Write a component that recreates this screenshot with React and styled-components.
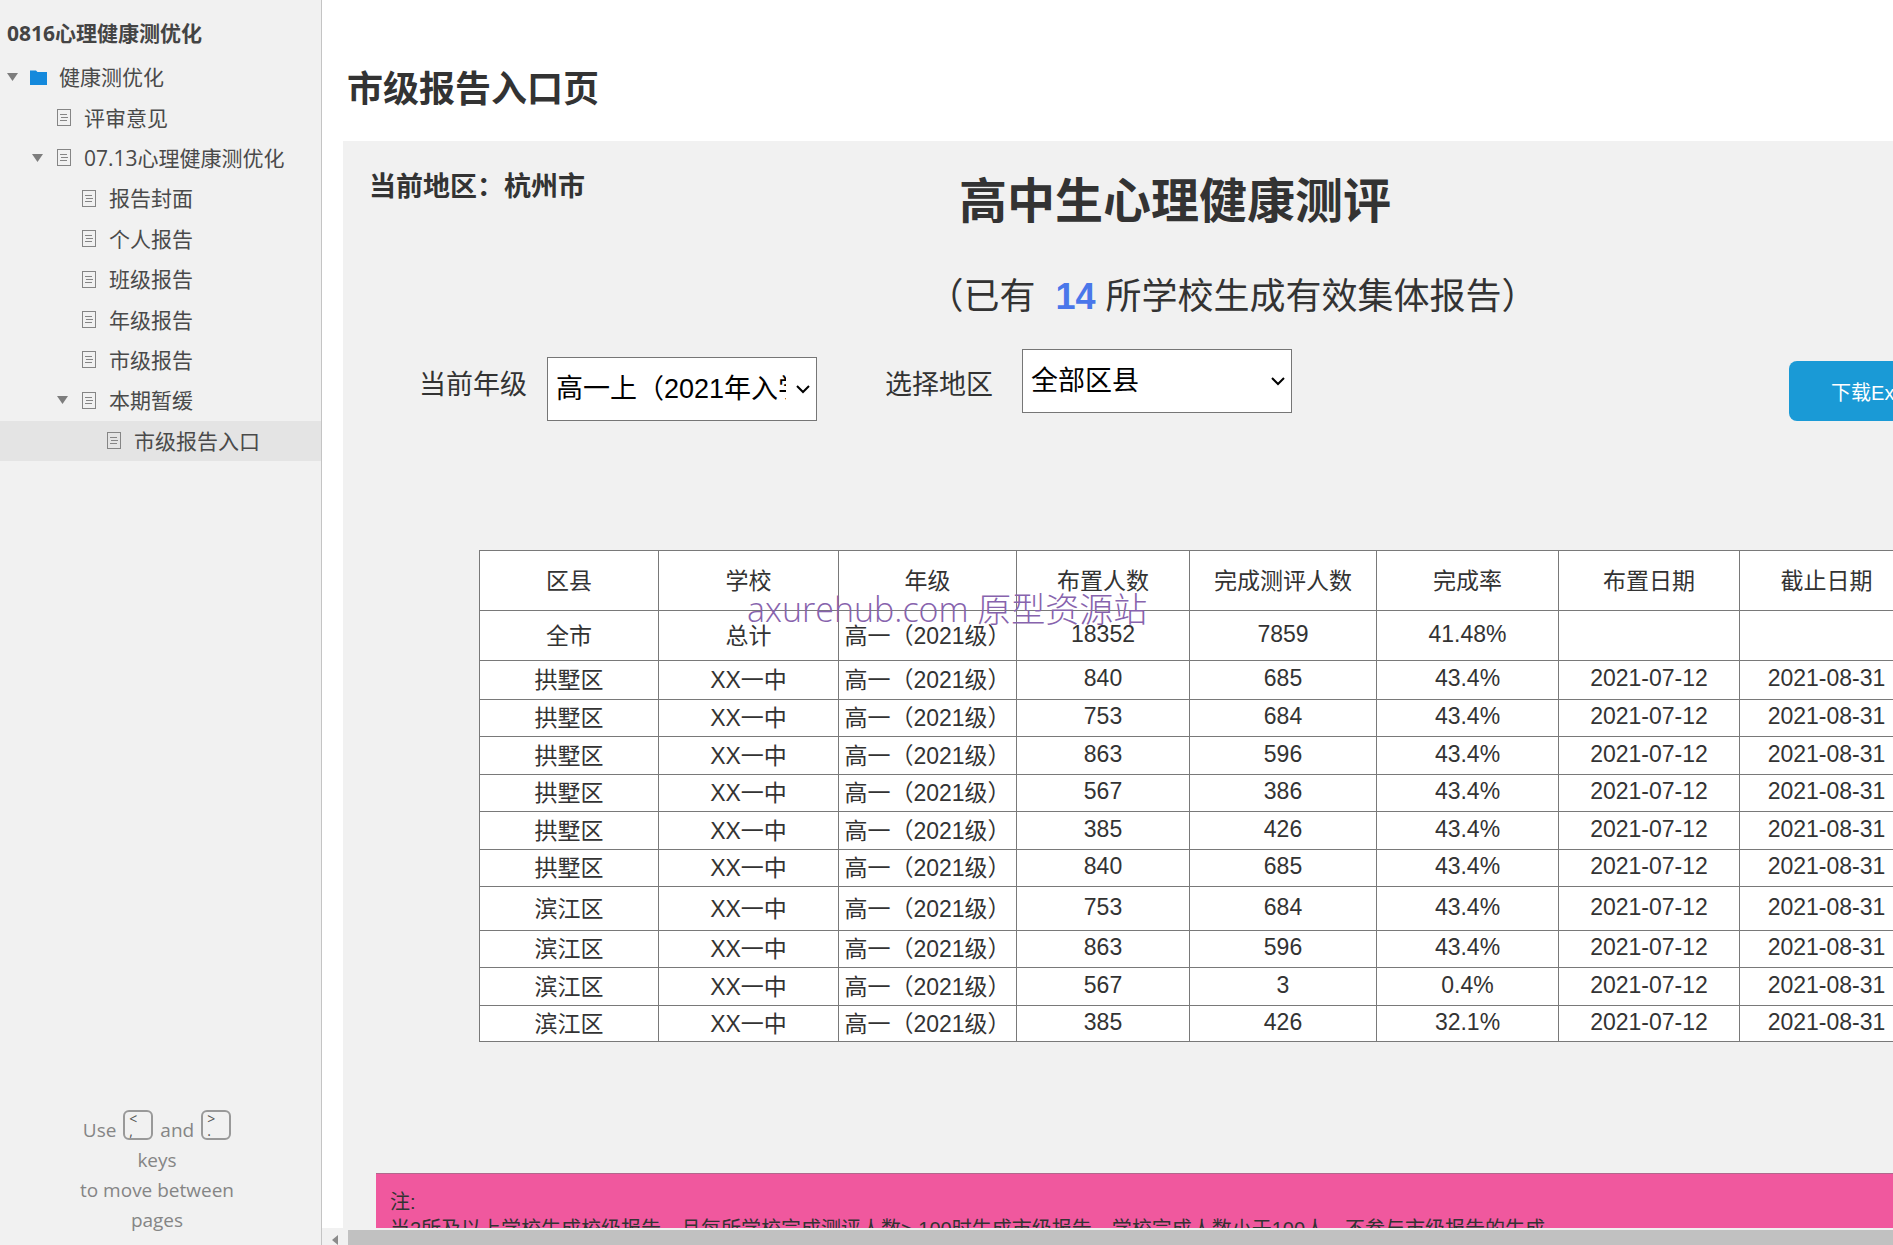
import React from "react";
import styled, { createGlobalStyle } from "styled-components";

const uiFont = `"Open Sans", "Noto Sans CJK SC", sans-serif`;
const pageFont = `"Liberation Sans", "Noto Sans CJK SC", sans-serif`;

const tree = [
  { label: "健康测优化", level: 0, folder: true, open: true },
  { label: "评审意见", level: 1 },
  { label: "07.13心理健康测优化", level: 1, open: true },
  { label: "报告封面", level: 2 },
  { label: "个人报告", level: 2 },
  { label: "班级报告", level: 2 },
  { label: "年级报告", level: 2 },
  { label: "市级报告", level: 2 },
  { label: "本期暂缓", level: 2, open: true },
  { label: "市级报告入口", level: 3, active: true },
];

const columns = [
  { title: "区县", width: 179 },
  { title: "学校", width: 180 },
  { title: "年级", width: 178 },
  { title: "布置人数", width: 173 },
  { title: "完成测评人数", width: 187 },
  { title: "完成率", width: 182 },
  { title: "布置日期", width: 181 },
  { title: "截止日期", width: 174 },
];

const grade = "高一（2021级）";
const dates = ["2021-07-12", "2021-08-31"];

const rows = [
  { height: 50, cells: ["全市", "总计", grade, "18352", "7859", "41.48%", "", ""] },
  { height: 39, cells: ["拱墅区", "XX一中", grade, "840", "685", "43.4%", ...dates] },
  { height: 37, cells: ["拱墅区", "XX一中", grade, "753", "684", "43.4%", ...dates] },
  { height: 38, cells: ["拱墅区", "XX一中", grade, "863", "596", "43.4%", ...dates] },
  { height: 37, cells: ["拱墅区", "XX一中", grade, "567", "386", "43.4%", ...dates] },
  { height: 38, cells: ["拱墅区", "XX一中", grade, "385", "426", "43.4%", ...dates] },
  { height: 37, cells: ["拱墅区", "XX一中", grade, "840", "685", "43.4%", ...dates] },
  { height: 44, cells: ["滨江区", "XX一中", grade, "753", "684", "43.4%", ...dates] },
  { height: 37, cells: ["滨江区", "XX一中", grade, "863", "596", "43.4%", ...dates] },
  { height: 38, cells: ["滨江区", "XX一中", grade, "567", "3", "0.4%", ...dates] },
  { height: 36, cells: ["滨江区", "XX一中", grade, "385", "426", "32.1%", ...dates] },
];

function FolderIcon() {
  return (
    <svg width="17" height="15" viewBox="0 0 17 15">
      <path d="M0 0.5h6l1.5 1.5H17v13H0z" fill="#1489dc" />
    </svg>
  );
}

function PageIcon() {
  return (
    <svg width="14" height="17" viewBox="0 0 14 17" fill="none" stroke="#858585">
      <rect x="0.5" y="0.5" width="13" height="16" />
      <path d="M3 5.5h7M4 8.5h7M3 11.5h7" />
    </svg>
  );
}

function Chevron() {
  return (
    <svg width="14" height="9" viewBox="0 0 14 9" fill="none" stroke="#000" strokeWidth="2">
      <path d="M1 1l6 6 6-6" />
    </svg>
  );
}

function Sidebar() {
  return (
    <Side>
      <ProjectName>0816心理健康测优化</ProjectName>
      <nav>
        <Tree>
          {tree.map((item) => (
            <TreeItem key={item.label} $level={item.level} $active={item.active}>
              <Toggle>
                {item.open && (
                  <svg width="11" height="8" viewBox="0 0 11 8">
                    <path d="M0 0h11L5.5 8z" fill="#7d7d7d" />
                  </svg>
                )}
              </Toggle>
              <TreeLink href="#">
                <IconSlot>{item.folder ? <FolderIcon /> : <PageIcon />}</IconSlot>
                {item.label}
              </TreeLink>
            </TreeItem>
          ))}
        </Tree>
      </nav>
      <Hint>
        <HintLine>
          Use
          <Key>
            <span>&lt;</span>
            <span>,</span>
          </Key>
          and
          <Key>
            <span>&gt;</span>
            <span>.</span>
          </Key>
        </HintLine>
        <div>keys</div>
        <div>to move between</div>
        <div>pages</div>
      </Hint>
    </Side>
  );
}

function Filters() {
  return (
    <FilterRow>
      <Field>
        <label htmlFor="grade">当前年级</label>
        <SelectBox $low>
          <Select id="grade">
            <option>高一上（2021年入学）</option>
          </Select>
          <Chevron />
        </SelectBox>
      </Field>
      <Field $wide>
        <label htmlFor="area">选择地区</label>
        <SelectBox>
          <Select id="area">
            <option>全部区县</option>
          </Select>
          <Chevron />
        </SelectBox>
      </Field>
      <Download type="button">下载Excel</Download>
    </FilterRow>
  );
}

function ReportTable() {
  return (
    <TableBox>
      <Table>
        <colgroup>
          {columns.map((col) => (
            <Col key={col.title} $width={col.width} />
          ))}
        </colgroup>
        <thead>
          <Row $height={60}>
            {columns.map((col) => (
              <th key={col.title}>{col.title}</th>
            ))}
          </Row>
        </thead>
        <tbody>
          {rows.map((row, i) => (
            <Row key={i} $height={row.height}>
              {row.cells.map((cell, j) => (
                <td key={j}>{cell}</td>
              ))}
            </Row>
          ))}
        </tbody>
      </Table>
      <Watermark>axurehub.com 原型资源站</Watermark>
    </TableBox>
  );
}

export default function App() {
  return (
    <Layout>
      <GlobalStyle />
      <Sidebar />
      <Main>
        <Canvas>
          <PageTitle>市级报告入口页</PageTitle>
          <Panel>
            <PanelHead>
              <Region>当前地区：杭州市</Region>
              <Heading>高中生心理健康测评</Heading>
            </PanelHead>
            <Summary>
              （已有&nbsp; <strong>14</strong> 所学校生成有效集体报告）
            </Summary>
            <Filters />
            <ReportTable />
            <Note>
              <p>注:</p>
              <p>
                当2所及以上学校生成校级报告，且每所学校完成测评人数&gt;
                100时生成市级报告，学校完成人数小于100人，不参与市级报告的生成
              </p>
            </Note>
          </Panel>
        </Canvas>
        <ScrollBar>
          <svg width="6" height="10" viewBox="0 0 6 10">
            <path d="M6 0v10L0 5z" fill="#8b8b8b" />
          </svg>
          <Thumb />
        </ScrollBar>
      </Main>
    </Layout>
  );
}

const GlobalStyle = createGlobalStyle`
  * {
    box-sizing: border-box;
  }
  body {
    margin: 0;
    background: #fff;
  }
  h1, h2, h3, p, ul {
    margin: 0;
    padding: 0;
  }
`;

const Layout = styled.div`
  display: flex;
  height: 100vh;
  overflow: hidden;
`;

const Side = styled.aside`
  flex: none;
  width: 322px;
  display: flex;
  flex-direction: column;
  background: #f1f1f1;
  border-right: 1px solid #c4c4c4;
  color: #444;
  font-family: ${uiFont};
`;

const ProjectName = styled.h1`
  padding: 18px 7px 9px;
  font-size: 21px;
  line-height: 30px;
`;

const Tree = styled.ul`
  display: grid;
  grid-auto-rows: 1fr;
  height: 404px;
  list-style: none;
`;

const TreeItem = styled.li`
  display: flex;
  align-items: center;
  gap: 12px;
  padding-left: ${({ $level }) => 7 + $level * 25}px;
  background: ${({ $active }) => ($active ? "#e4e4e4" : "transparent")};
`;

const Toggle = styled.span`
  display: flex;
  width: 11px;
`;

const TreeLink = styled.a`
  display: flex;
  align-items: center;
  gap: 12px;
  color: #4a4a4a;
  font-size: 21px;
  line-height: 30px;
  text-decoration: none;
`;

const IconSlot = styled.span`
  display: flex;
  justify-content: center;
  width: 17px;
`;

const Hint = styled.div`
  margin-top: auto;
  padding: 0 7px 10px 0;
  color: #858585;
  font-size: 19px;
  line-height: 30px;
  text-align: center;
`;

const HintLine = styled.div`
  display: flex;
  justify-content: center;
  gap: 7px;
`;

const Key = styled.kbd`
  display: flex;
  flex-direction: column;
  width: 30px;
  height: 30px;
  margin-top: -5px;
  padding: 1px 4px;
  border: 2px solid #999;
  border-radius: 6px;
  color: #555;
  font-family: ${uiFont};
  font-size: 14px;
  line-height: 12px;
  text-align: left;
`;

const Main = styled.main`
  flex: 1;
  min-width: 0;
  display: flex;
  flex-direction: column;
  color: #333;
  font-family: ${pageFont};
`;

const Canvas = styled.div`
  flex: 1;
  min-height: 0;
  overflow: hidden;
  padding-left: 21px;
`;

const PageTitle = styled.h2`
  padding: 65px 4px 26px;
  font-size: 36px;
  line-height: 50px;
`;

const Panel = styled.section`
  min-width: 1664px;
  min-height: 1200px;
  padding-top: 31px;
  background: #f1f1f1;
`;

const PanelHead = styled.div`
  display: grid;
  grid-template-columns: 1fr auto 1fr;
  align-items: start;
`;

const Region = styled.h3`
  padding-left: 26px;
  font-size: 27px;
  line-height: 30px;
`;

const Heading = styled.h3`
  font-size: 48px;
  line-height: 60px;
`;

const Summary = styled.p`
  padding: 43px 0 30px 115px;
  font-size: 36px;
  line-height: 44px;
  text-align: center;
  strong {
    color: #4a77ea;
  }
`;

const FilterRow = styled.div`
  display: flex;
  align-items: flex-start;
  padding: 0 45px 0 76px;
`;

const Field = styled.div`
  display: flex;
  align-items: flex-start;
  gap: ${({ $wide }) => ($wide ? 29 : 20)}px;
  margin-right: 68px;
  font-size: 27px;
  line-height: 32px;
  label {
    padding-top: 20px;
  }
`;

const SelectBox = styled.div`
  position: relative;
  margin-top: ${({ $low }) => ($low ? 8 : 0)}px;
  svg {
    position: absolute;
    top: 28px;
    right: 7px;
    pointer-events: none;
  }
`;

const Select = styled.select`
  display: block;
  appearance: none;
  width: 270px;
  height: 64px;
  padding: 0 30px 0 8px;
  border: 1px solid #767676;
  border-radius: 0;
  background: #fff;
  color: #000;
  font-family: ${pageFont};
  font-size: 27px;
`;

const Download = styled.button`
  width: 173px;
  height: 60px;
  margin: 12px 0 0 auto;
  border: 0;
  border-radius: 8px;
  background: #1a9ad6;
  color: #fff;
  font-family: ${pageFont};
  font-size: 20px;
`;

const TableBox = styled.div`
  position: relative;
  margin: 129px 0 131px 136px;
`;

const Table = styled.table`
  width: 1434px;
  table-layout: fixed;
  border-collapse: collapse;
  background: #fff;
  font-size: 23px;
  line-height: 30px;
  text-align: center;
  th,
  td {
    padding: 0;
    border: 1px solid #797979;
    font-weight: 400;
    white-space: nowrap;
  }
  td:nth-child(n + 4) {
    padding-bottom: 4px;
  }
`;

const Col = styled.col`
  width: ${({ $width }) => $width}px;
`;

const Row = styled.tr`
  height: ${({ $height }) => $height}px;
`;

const Watermark = styled.div`
  position: absolute;
  top: 39px;
  left: 268px;
  color: #8763ad;
  font-family: ${uiFont};
  font-size: 34px;
  font-weight: 300;
  line-height: 40px;
`;

const Note = styled.div`
  height: 200px;
  margin-left: 33px;
  padding: 15px 14px;
  border-top: 1px solid #b0688c;
  background: #f0589e;
  font-size: 20px;
  line-height: 27px;
`;

const ScrollBar = styled.div`
  display: flex;
  align-items: center;
  gap: 10px;
  height: 17px;
  padding: 2px 0 0 10px;
  background: #f1f1f1;
  svg {
    margin-top: 5px;
  }
`;

const Thumb = styled.div`
  flex: 1;
  height: 100%;
  background: #c1c1c1;
`;
